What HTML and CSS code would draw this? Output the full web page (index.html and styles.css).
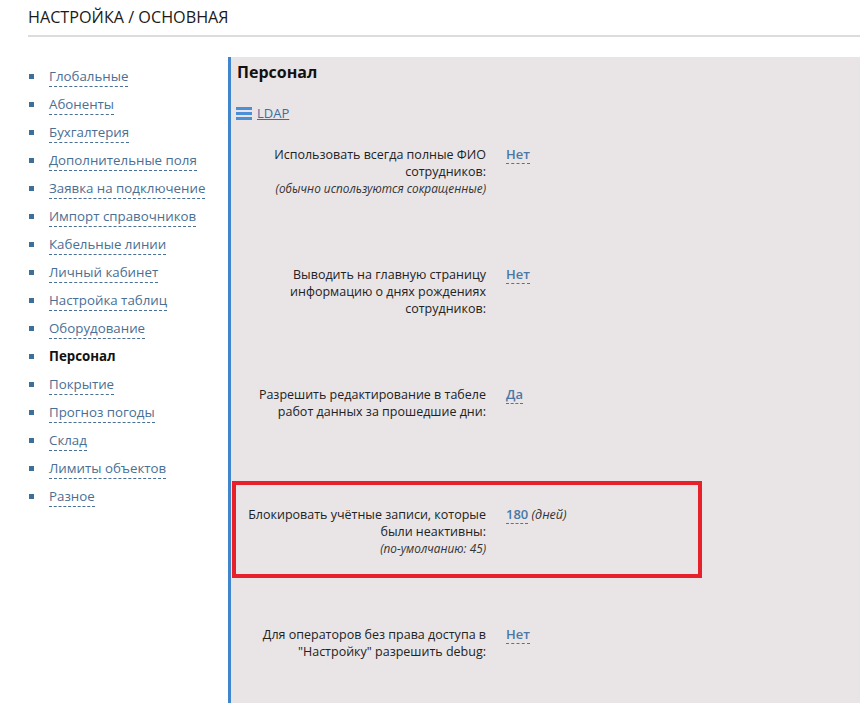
FILE: index.html
```html
<!DOCTYPE html>
<html lang="ru">
<head>
  <meta charset="UTF-8">
  <title>Настройка / Основная</title>
  <link rel="stylesheet" href="styles.css">
</head>
<body>
  <div class="header">
    <h1>НАСТРОЙКА / ОСНОВНАЯ</h1>
  </div>

  <div class="layout">
    <ul class="side-menu">
      <li><a href="#">Глобальные</a></li>
      <li><a href="#">Абоненты</a></li>
      <li><a href="#">Бухгалтерия</a></li>
      <li><a href="#">Дополнительные поля</a></li>
      <li><a href="#">Заявка на подключение</a></li>
      <li><a href="#">Импорт справочников</a></li>
      <li><a href="#">Кабельные линии</a></li>
      <li><a href="#">Личный кабинет</a></li>
      <li><a href="#">Настройка таблиц</a></li>
      <li><a href="#">Оборудование</a></li>
      <li class="active">Персонал</li>
      <li><a href="#">Покрытие</a></li>
      <li><a href="#">Прогноз погоды</a></li>
      <li><a href="#">Склад</a></li>
      <li><a href="#">Лимиты объектов</a></li>
      <li><a href="#">Разное</a></li>
    </ul>

    <div class="panel">
      <h2>Персонал</h2>
      <div class="sub-link">
        <svg class="menu-icon" width="16" height="13" viewBox="0 0 16 13">
          <rect x="0" y="0" width="16" height="3" fill="#4a8fd8"/>
          <rect x="0" y="5" width="16" height="3" fill="#4a8fd8"/>
          <rect x="0" y="10" width="16" height="3" fill="#4a8fd8"/>
        </svg>
        <a href="#">LDAP</a>
      </div>

      <div class="setting">
        <div class="label">
          Использовать всегда полные ФИО сотрудников:
          <div class="hint">(обычно используются сокращенные)</div>
        </div>
        <div class="value"><a href="#">Нет</a></div>
      </div>

      <div class="setting">
        <div class="label">Выводить на главную страницу информацию о днях рождениях сотрудников:</div>
        <div class="value"><a href="#">Нет</a></div>
      </div>

      <div class="setting">
        <div class="label">Разрешить редактирование в табеле работ данных за прошедшие дни:</div>
        <div class="value"><a href="#">Да</a></div>
      </div>

      <div class="setting highlight">
        <div class="label">
          Блокировать учётные записи, которые были неактивны:
          <div class="hint">(по-умолчанию: 45)</div>
        </div>
        <div class="value"><a href="#">180</a> <span class="unit">(дней)</span></div>
      </div>

      <div class="setting">
        <div class="label">Для операторов без права доступа в "Настройку" разрешить debug:</div>
        <div class="value"><a href="#">Нет</a></div>
      </div>
    </div>
  </div>
</body>
</html>
```

FILE: styles.css
```css
/* Reset */
* {
  box-sizing: border-box;
  margin: 0;
  padding: 0;
}

body {
  font-family: 'Open Sans', 'Liberation Sans', sans-serif;
  background-color: #ffffff;
  color: #222;
  height: 703px;
  overflow: hidden;
}

/* Header */
.header {
  margin-left: 28px;
  padding-top: 6px;
  height: 37px;
  border-bottom: 2px solid #dcdcdc;
}

.header h1 {
  font-size: 16.2px;
  font-weight: 400;
  line-height: 22px;
  color: #1a1a1a;
}

/* Layout */
.layout {
  display: flex;
  margin-top: 20px;
  height: 646px;
}

/* Side menu */
.side-menu {
  width: 228px;
  flex-shrink: 0;
  list-style: none;
  padding-top: 5px;
}

.side-menu li {
  position: relative;
  padding-left: 49px;
  font-size: 13.3px;
  line-height: 28px;
  color: #4a6f94;
}

.side-menu li::before {
  content: '';
  position: absolute;
  left: 29px;
  top: 12px;
  width: 5px;
  height: 5px;
  background-color: #3e6f9b;
}

.side-menu a {
  color: #4a6f94;
  text-decoration: none;
  border-bottom: 1px dashed #4a6f94;
  padding-bottom: 1px;
}

.side-menu li.active {
  color: #111;
  font-weight: 700;
}

/* Panel */
.panel {
  flex: 1;
  background-color: #e9e5e7;
  border-left: 3px solid #3f86cc;
  padding: 4px 0 0 5px;
}

.panel h2 {
  font-size: 16px;
  font-weight: 700;
  line-height: 22px;
  color: #111;
  padding-left: 1px;
}

.sub-link {
  display: flex;
  align-items: center;
  gap: 5px;
  margin-top: 22px;
  line-height: 17px;
  font-size: 13px;
}

.sub-link a {
  color: #3c6e9f;
  text-decoration: underline;
}

/* Settings */
.setting {
  position: relative;
  display: grid;
  grid-template-columns: 250px 1fr;
  column-gap: 20px;
  height: 120px;
  padding-top: 24px;
  font-size: 12.5px;
  line-height: 17px;
}

.setting .label {
  text-align: right;
  color: #222;
}

.setting .hint {
  font-size: 11.8px;
  font-style: italic;
  color: #333;
}

.setting .value a {
  color: #4a78a6;
  font-weight: 600;
  font-size: 13px;
  text-decoration: none;
  border-bottom: 1px dashed #4a78a6;
}

.setting .unit {
  font-style: italic;
  color: #333;
}

.setting.highlight::after {
  content: '';
  box-sizing: border-box;
  position: absolute;
  top: -1px;
  left: -4px;
  width: 470px;
  height: 97px;
  border: 4px solid #e8202a;
  pointer-events: none;
}
```
